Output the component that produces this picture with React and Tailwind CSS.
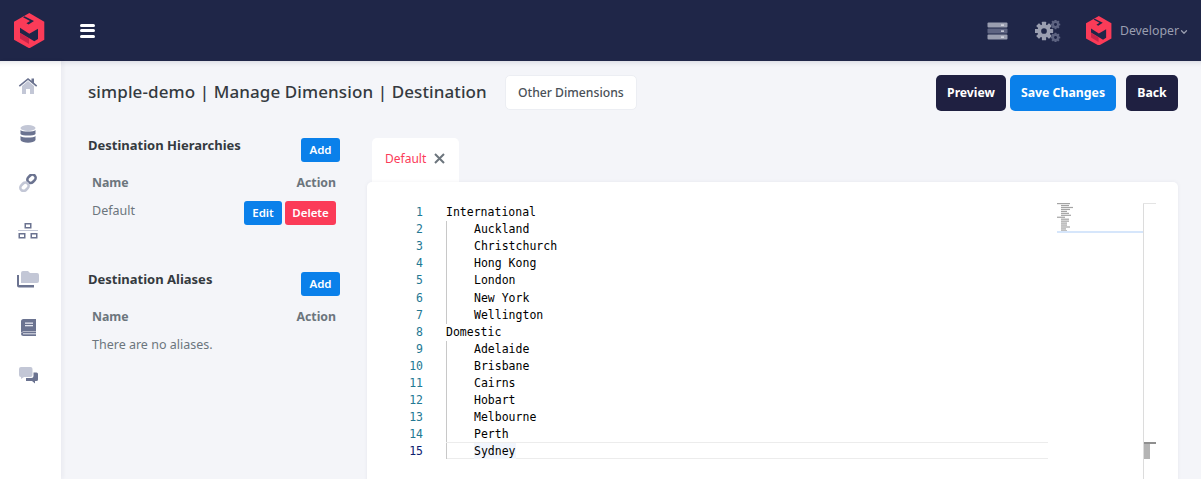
import { ChevronDown } from 'lucide-react';

const CITIES = [
  ['International', 0],
  ['Auckland', 1],
  ['Christchurch', 1],
  ['Hong Kong', 1],
  ['London', 1],
  ['New York', 1],
  ['Wellington', 1],
  ['Domestic', 0],
  ['Adelaide', 1],
  ['Brisbane', 1],
  ['Cairns', 1],
  ['Hobart', 1],
  ['Melbourne', 1],
  ['Perth', 1],
  ['Sydney', 1],
];

const Logo = ({ width = 31 }) => (
  <svg width={width} height={width * 1.14} viewBox="0 0 31 35.300">
    <path d="M15.300 0 L30.300 8.700 V26.700 L15.300 35.300 L0 26.700 V8.700 Z" fill="#fb3b58" />
    <path d="M6 20 L15 25.500 V31 L6 25.500 Z" fill="#c9254a" />
    <path d="M10.500 3.200 L20 8 L14.600 11.600 L12.400 10.300 L16 8 L9 4.200 Z" fill="#1f2648" />
    <path d="M6 14.800 L15.300 20.800 L24 15.800 V26 L20.300 28.200 L6 19.800 Z" fill="#1f2648" />
  </svg>
);

const Home = () => (
  <svg width="20" height="18" viewBox="0 0 20 18">
    <path d="M4 9 L10 4 L16 9 V17 H12 V12 H8 V17 H4 Z" fill="#c3c7d6" />
    <path d="M0.800 8.500 L10 1 L13.500 3.800 V1.500 H16 V5.800 L19.200 8.500 L18.200 9.700 L10 3 L1.800 9.700 Z" fill="#6b7390" />
  </svg>
);

const Database = () => (
  <svg width="16" height="18" viewBox="0 0 16 18">
    <ellipse cx="8" cy="3" rx="7.500" ry="3" fill="#c3c7d6" />
    <path d="M0.500 5 C2 7 14 7 15.500 5 V9 C14 11 2 11 0.500 9 Z" fill="#6b7390" />
    <path d="M0.500 11 C2 13 14 13 15.500 11 V15 C14 18.500 2 18.500 0.500 15 Z" fill="#6b7390" />
  </svg>
);

const LinkIcon = () => (
  <svg width="18" height="18" viewBox="0 0 18 18" fill="none" strokeWidth="2.600">
    <rect x="8" y="1.500" width="9" height="6.500" rx="3.200" transform="rotate(-45 12.500 4.750)" stroke="#6b7390" />
    <rect x="1" y="9.500" width="9" height="6.500" rx="3.200" transform="rotate(-45 5.500 12.750)" stroke="#c3c7d6" />
  </svg>
);

const Sitemap = () => (
  <svg width="20" height="16" viewBox="0 0 20 16">
    <rect x="0" y="7" width="20" height="1" fill="#c3c7d6" />
    <path d="M6.500 0 H13.500 V5.500 H6.500 Z M8 1.500 V4 H12 V1.500 Z" fill="#6b7390" fillRule="evenodd" />
    <path d="M0.500 10 H7.500 V15.500 H0.500 Z M2 11.500 V14 H6 V11.500 Z" fill="#6b7390" fillRule="evenodd" />
    <path d="M12.500 10 H19.500 V15.500 H12.500 Z M14 11.500 V14 H18 V11.500 Z" fill="#6b7390" fillRule="evenodd" />
  </svg>
);

const Folders = () => (
  <svg width="22" height="17" viewBox="0 0 22 17">
    <path d="M0 4 H2 V14 H17 V16.500 H2 Q0 16.500 0 14.500 Z" fill="#6b7390" />
    <path d="M4 2 Q4 0 6 0 H11 L13 2 H20 Q22 2 22 4 V10 Q22 12 20 12 H4 Z" fill="#c3c7d6" />
  </svg>
);

const Book = () => (
  <svg width="15" height="17" viewBox="0 0 15 17">
    <path d="M2.500 0 H15 V12.500 H2.500 Q0 12.500 0 14 V2.500 Q0 0 2.500 0 Z" fill="#6b7390" />
    <path d="M0 14.500 Q0 13 2.500 13 H15 V17 H2.500 Q0 17 0 14.500 Z" fill="#6b7390" />
    <rect x="4" y="3.500" width="8" height="1.300" fill="#e5e7ef" />
    <rect x="4" y="6" width="8" height="1.300" fill="#e5e7ef" />
    <rect x="2" y="14.300" width="13" height="1" fill="#e5e7ef" />
  </svg>
);

const Comments = () => (
  <svg width="19" height="17" viewBox="0 0 19 17">
    <path d="M2 0 H11.500 Q13.500 0 13.500 2 V8 Q13.500 10 11.500 10 H5 L2 12 V10 Q0 10 0 8 V2 Q0 0 2 0 Z" fill="#c3c7d6" />
    <path d="M14.500 5.500 H17.500 Q19 5.500 19 7 V12.500 Q19 14 17.500 14 H16 V16.500 L13 14 H7 V11 H12.500 Q14.500 11 14.500 9 Z" fill="#6b7390" />
  </svg>
);

const ServerIcon = () => (
  <svg width="21" height="18" viewBox="0 0 21 18">
    <rect x="0.500" y="0.500" width="20" height="5" rx="1" fill="#9a9eb0" />
    <rect x="0.500" y="6.500" width="20" height="5" rx="1" fill="#5e6482" />
    <rect x="0.500" y="12.500" width="20" height="5" rx="1" fill="#9a9eb0" />
    <rect x="14" y="2.500" width="3" height="1.200" fill="#e5e7ef" />
    <rect x="14" y="8.500" width="3" height="1.200" fill="#e5e7ef" />
    <rect x="14" y="14.500" width="3" height="1.200" fill="#e5e7ef" />
  </svg>
);

const Gear = ({ cx, cy, r, color, hole }) => {
  const teeth = [0, 45, 90, 135];
  return (
    <g fill={color}>
      {teeth.map((a) => (
        <rect key={a} x={cx - r * 0.28} y={cy - r * 1.22} width={r * 0.56} height={r * 2.44} rx="0.500" transform={`rotate(${a} ${cx} ${cy})`} />
      ))}
      <circle cx={cx} cy={cy} r={r * 0.88} />
      <circle cx={cx} cy={cy} r={r * 0.38} fill={hole} />
    </g>
  );
};

const Cogs = () => (
  <svg width="26" height="22" viewBox="0 0 26 22">
    <Gear cx={9} cy={11} r={7.500} color="#9a9eb0" hole="#1f2648" />
    <Gear cx={20.500} cy={4.500} r={3.900} color="#5e6482" hole="#1f2648" />
    <Gear cx={20.500} cy={17.500} r={3.900} color="#5e6482" hole="#1f2648" />
  </svg>
);

const NAV_ICONS = [Home, Database, LinkIcon, Sitemap, Folders, Book, Comments];

const SmallBtn = ({ children, red }) => (
  <button className={`h-6 rounded-[3px] text-[11.500px] font-semibold text-white ${red ? 'w-[51px] bg-[#fb3b58]' : 'w-[38px] bg-[#0a80ea]'}`}>
    {children}
  </button>
);

const Minimap = () => (
  <svg width="16" height="30" viewBox="0 0 16 30">
    {CITIES.map(([name, indent], i) => (
      <rect key={name} x={indent ? 4 : 0} y={i * 1.950} width={name.length} height="1.200" fill="#a4a4a4" />
    ))}
  </svg>
);

export default function App() {
  return (
    <div className="flex h-[479px] w-[1201px] flex-col overflow-hidden bg-[#f4f5f9] font-['Noto_Sans',sans-serif]">
      {/* Top bar */}
      <header className="flex h-[61px] shrink-0 items-center bg-[#1f2648] pl-[14px] pr-[12px]">
        <Logo />
        <div className="ml-[35px] flex w-[15px] flex-col gap-[2.500px]">
          <span className="h-[3px] rounded-full bg-white" />
          <span className="h-[3px] rounded-full bg-white" />
          <span className="h-[3px] rounded-full bg-white" />
        </div>
        <div className="ml-auto flex items-center">
          <ServerIcon />
          <div className="ml-[27px]"><Cogs /></div>
          <div className="ml-[25px]"><Logo width={26} /></div>
          <span className="ml-[8px] pt-[2px] text-[12.300px] text-[#9a9eb0]">Developer</span>
          <ChevronDown size={10} strokeWidth={3} className="mt-[2px] text-[#9a9eb0]" />
        </div>
      </header>

      <div className="flex min-h-0 flex-1">
        {/* Side nav */}
        <nav className="z-10 flex w-[61px] shrink-0 flex-col items-center bg-white pr-[5px] pt-[1px] shadow-[2px_0_4px_rgba(31,38,72,0.05),inset_0_6px_6px_-6px_rgba(31,38,72,0.2)]">
          {NAV_ICONS.map((Icon, i) => (
            <div key={i} className="flex h-[48.300px] w-full items-center justify-center">
              <Icon />
            </div>
          ))}
        </nav>

        <main className="min-w-0 flex-1 pl-[27px] pr-[23px] pt-[14px] shadow-[inset_0_6px_6px_-6px_rgba(31,38,72,0.2)]">
          {/* Title row */}
          <div className="flex h-[35px] items-center">
            <h1 className="-mt-[2px] text-[17px] font-medium tracking-[0.100px] text-[#343a40]">simple-demo | Manage Dimension | Destination</h1>
            <button className="ml-[18px] h-[35px] w-[132px] rounded-[5px] border border-[#eceef3] bg-white pt-[2px] text-[12.200px] font-medium text-[#495057]">Other Dimensions</button>
            <div className="ml-auto flex items-center">
              <button className="h-9 w-[70px] rounded-[5px] bg-[#1f2041] pt-[2px] text-[12.200px] font-bold text-white">Preview</button>
              <button className="ml-[4px] h-9 w-[106px] rounded-[5px] bg-[#0a80ea] pt-[2px] text-[12.300px] font-bold text-white">Save Changes</button>
              <button className="ml-[10px] h-9 w-[52px] rounded-[5px] bg-[#1f2041] pt-[2px] text-[12.300px] font-bold text-white">Back</button>
            </div>
          </div>

          <div className="mt-[28px] flex">
            {/* Left column */}
            <aside className="w-[252px] shrink-0">
              <div className="flex items-start justify-between">
                <h2 className="-mt-[1px] text-[13px] font-bold leading-[16px] text-[#343a40]">Destination Hierarchies</h2>
                <button className="h-6 w-[39px] rounded-[3px] bg-[#0a80ea] text-[11.500px] font-semibold text-white">Add</button>
              </div>
              <div className="mt-[12px] flex justify-between px-[4px] text-[12.300px] font-bold leading-[18px] text-[#6c757d]">
                <span>Name</span>
                <span>Action</span>
              </div>
              <div className="mt-[9px] flex items-start justify-between px-[4px]">
                <span className="pt-[1px] text-[12.500px] leading-[18px] text-[#6c757d]">Default</span>
                <div className="flex gap-[3px]">
                  <SmallBtn>Edit</SmallBtn>
                  <SmallBtn red>Delete</SmallBtn>
                </div>
              </div>

              <div className="mt-[47px] flex items-start justify-between">
                <h2 className="-mt-[1px] text-[13px] font-bold leading-[16px] text-[#343a40]">Destination Aliases</h2>
                <button className="h-6 w-[39px] rounded-[3px] bg-[#0a80ea] text-[11.500px] font-semibold text-white">Add</button>
              </div>
              <div className="mt-[12px] flex justify-between px-[4px] text-[12.300px] font-bold leading-[18px] text-[#6c757d]">
                <span>Name</span>
                <span>Action</span>
              </div>
              <p className="mt-[10px] pl-[4px] text-[12.500px] leading-[18px] text-[#6c757d]">There are no aliases.</p>
            </aside>

            {/* Editor */}
            <section className="ml-[27px] min-w-0 flex-1">
              <div className="ml-[5px] flex h-[44px] w-[87px] items-center gap-[8px] rounded-t-[5px] bg-white pb-[3px] pl-[13px]">
                <span className="text-[12px] text-[#fb3b58]">Default</span>
                <svg width="11" height="11" viewBox="0 0 11 11" stroke="#6c757d" strokeWidth="2">
                  <path d="M1 1 L10 10 M10 1 L1 10" />
                </svg>
              </div>
              <div className="relative h-[320px] rounded-[5px] bg-white pt-[22.200px] shadow-[0_0_4px_rgba(31,38,72,0.06)]">
                <div className="font-['DejaVu_Sans_Mono',monospace] text-[11.500px] leading-[17.070px]">
                  {CITIES.map(([name, indent], i) => (
                    <div key={name} className={`flex h-[17.070px] ${i === 14 ? 'mr-[130px]' : ''}`}>
                      <span className={`w-[56px] shrink-0 text-right ${i === 14 ? 'text-[#0b216f]' : 'text-[#237893]'}`}>{i + 1}</span>
                      <div className={`ml-[23px] flex flex-1 text-black ${i === 14 ? '-mt-[1px] h-[17px] pt-[1px] shadow-[inset_0_1px_0_#ececec,inset_0_-1px_0_#ececec]' : ''}`}>
                        {indent ? <span className="w-[28px] shrink-0 border-l border-[#c8c8c8]" /> : null}
                        <span className={i === 14 ? 'bg-[#f2f6fd]' : ''}>{name}</span>
                      </div>
                    </div>
                  ))}
                </div>

                {/* Minimap and overview ruler */}
                <div className="absolute left-[690px] top-[21px]"><Minimap /></div>
                <div className="absolute left-[690px] top-[49px] h-[2px] w-[86px] bg-[#d6e6fb]" />
                <div className="absolute bottom-0 left-[776px] top-[21px] w-[1px] bg-[#dcdcdc]" />
                <div className="absolute left-[776px] top-[21px] h-[1px] w-[13px] bg-[#e4e4e4]" />
                <div className="absolute left-[777px] top-[260px] h-[2px] w-[12px] bg-[#8f8f8f]" />
                <div className="absolute left-[777px] top-[262px] h-[15px] w-[6px] bg-[#b4b4b4]" />
              </div>
            </section>
          </div>
        </main>
      </div>
    </div>
  );
}
